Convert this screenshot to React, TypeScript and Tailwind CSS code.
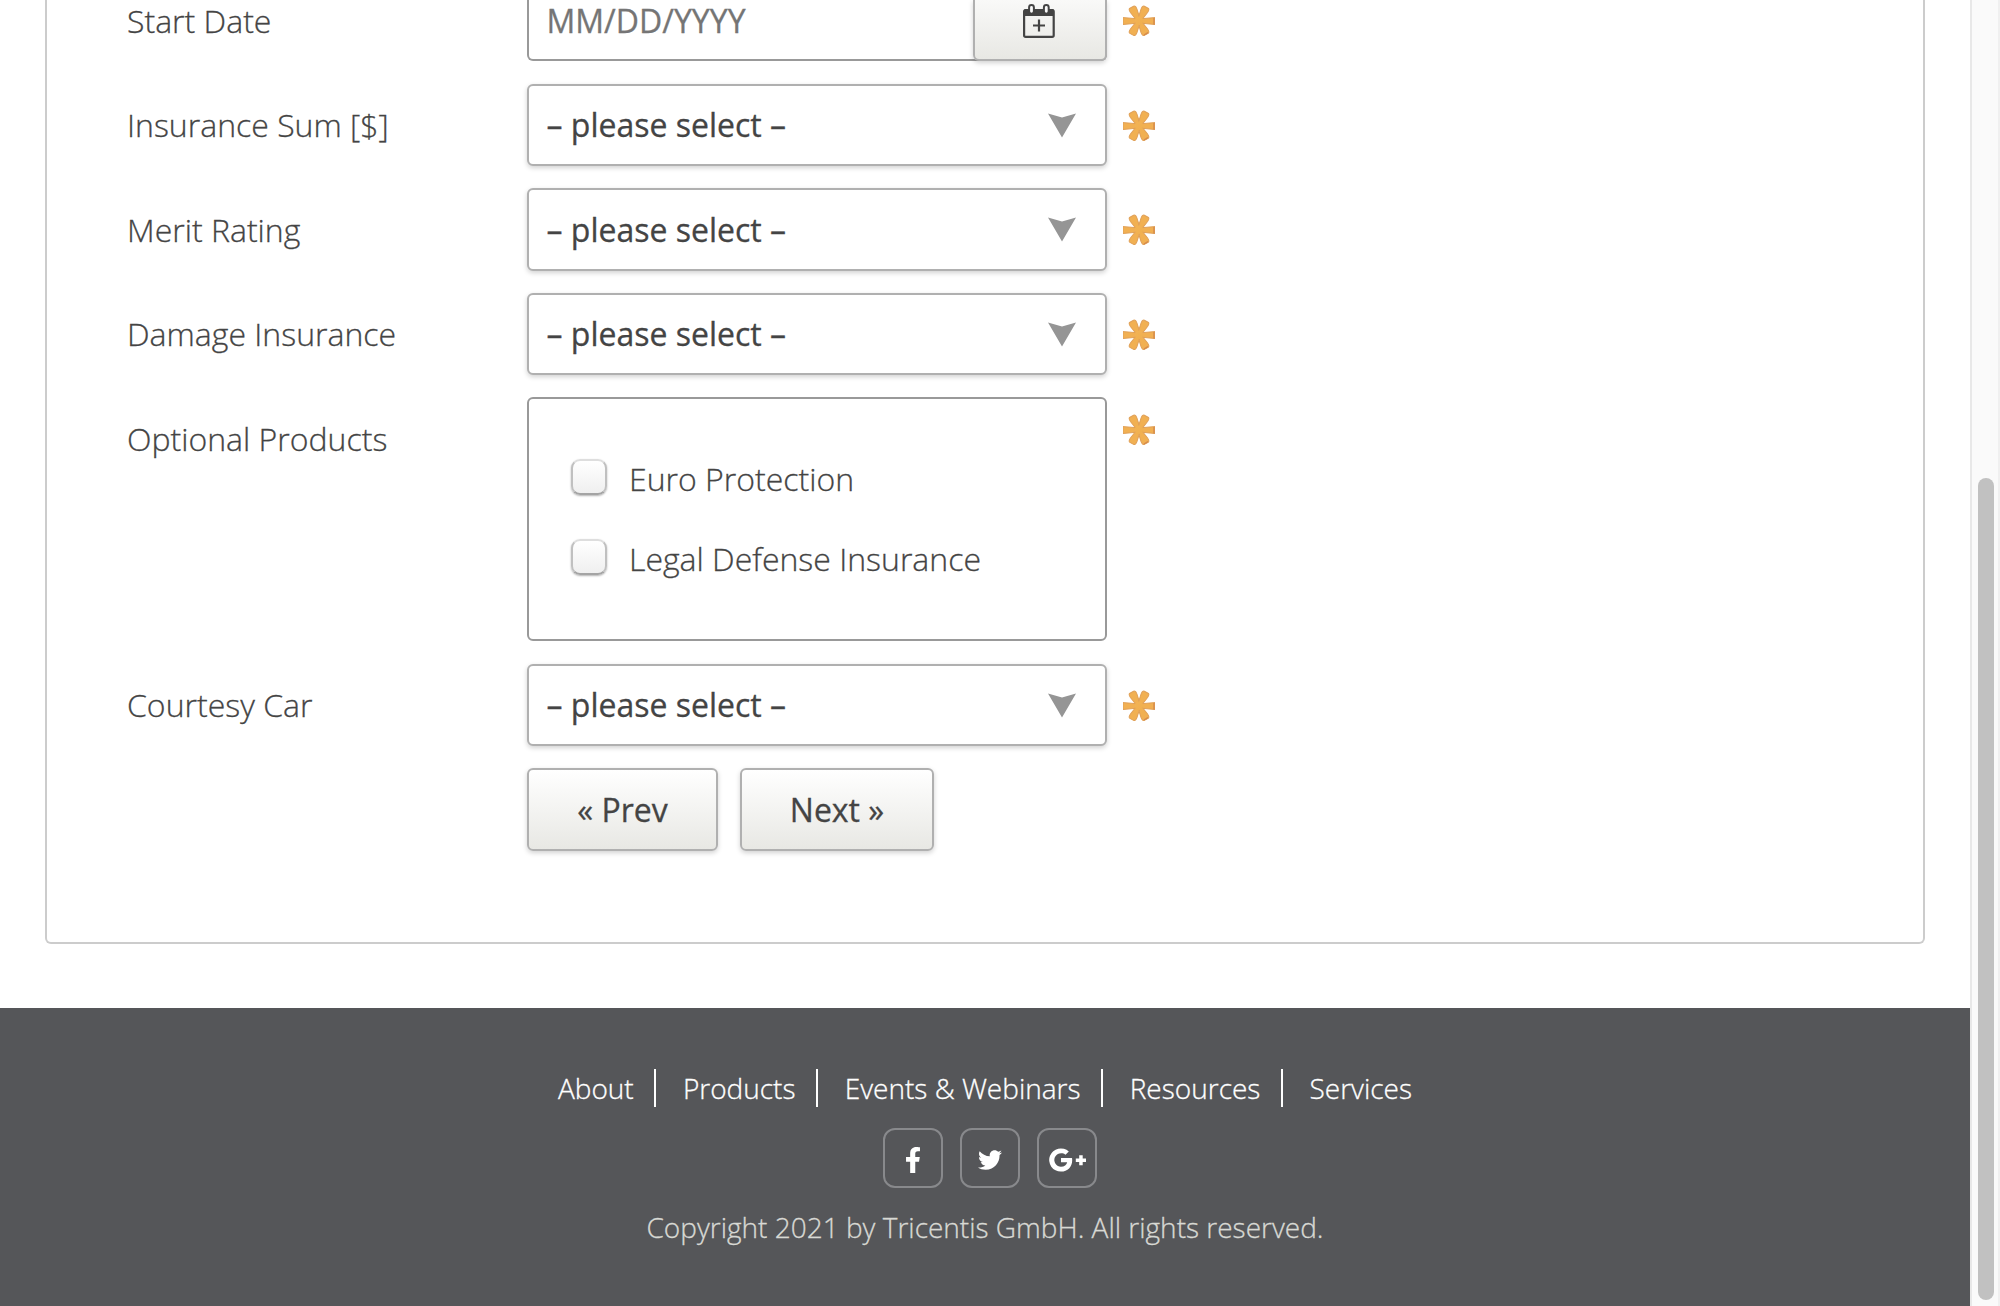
import React from "react";
import { FaFacebookF, FaTwitter } from "react-icons/fa";

const arm = "M14.400 15.800 12.300 4.500Q11.900 .4 13.900 .4h4.200Q20.100 .4 19.700 4.500L17.600 15.800Z";

function Asterisk() {
  return (
    <svg viewBox="0 0 32 32" className="h-8 w-8 shrink-0">
      <defs>
        <linearGradient id="amber" gradientUnits="userSpaceOnUse" x1="4" y1="2" x2="28" y2="30">
          <stop offset="0" stopColor="#f4b65c" />
          <stop offset="0.6" stopColor="#f0b050" />
          <stop offset="1" stopColor="#e39a4c" />
        </linearGradient>
      </defs>
      <path d="M0 12.600 16 13.900 32 12.600V19.500L16 18 0 19.500Z" fill="#f1b052" stroke="#e0a058" strokeWidth="1" />
      <g fill="#f1b052" stroke="#e0a058" strokeWidth="1">
        <path d={arm} transform="rotate(-28 16 15.800)" />
        <path d={arm} transform="rotate(28 16 15.800)" />
        <path d={arm} transform="rotate(152 16 15.800)" />
        <path d={arm} transform="rotate(208 16 15.800)" />
      </g>
      <path d="M31 13v6.500M25 27.500l-4 2.500" stroke="#d58a4c" strokeWidth="1.400" fill="none" />
      <circle cx="16" cy="15.800" r="4.200" fill="url(#amber)" />
    </svg>
  );
}

function Arrow() {
  return (
    <svg viewBox="0 0 28 25" className="mr-[29px] h-[25px] w-7" fill="#959595">
      <path d="M0 .5 14 4.5 28 .5 14 24.5Z" />
    </svg>
  );
}

function CalendarIcon() {
  return (
    <svg viewBox="0 0 32 34" className="h-[34px] w-8" fill="none" stroke="#444">
      <rect x="1.1" y="6" width="29.6" height="26.9" rx="1.6" strokeWidth="2.2" />
      <path d="M1 12V6.5Q1 5 2.5 5h27Q31 5 31 6.5V12Z" fill="#444" stroke="none" />
      <rect x="6.1" y="1.1" width="4.8" height="8.6" rx="2.4" fill="#fafafa" strokeWidth="2" />
      <rect x="20.9" y="1.1" width="4.8" height="8.6" rx="2.4" fill="#fafafa" strokeWidth="2" />
      <path d="M10 21.5h12M16 15.5v12" strokeWidth="2.2" />
    </svg>
  );
}

function GooglePlus() {
  return (
    <svg viewBox="0 0 37 24" className="h-6 w-[37px]" fill="#fff">
      <path d="M12 9.9v4.300h6.200c-.5 2.700-2.900 4.600-6.200 4.600a6.800 6.800 0 1 1 4.500-12l3.300-3.200A11.600 11.600 0 1 0 12 23.600c6.700 0 11.200-4.700 11.200-11.400 0-.8-.1-1.600-.2-2.300Z" />
      <path d="M30.200 7.200h3.500v3.300H37v3.400h-3.300v3.300h-3.500v-3.300h-3.400v-3.400h3.400Z" />
    </svg>
  );
}

function Label({ children, className = "leading-[82px]" }: { children: React.ReactNode; className?: string }) {
  return <div className={`w-[400px] shrink-0 text-[32px] font-light ${className}`}>{children}</div>;
}

function SelectRow({ label, className, labelClass }: { label: string; className: string; labelClass?: string }) {
  return (
    <div className={`flex items-start ${className}`}>
      <Label className={labelClass}>{label}</Label>
      <div className="mr-4 flex h-full w-[580px] items-center justify-between rounded-[6px] border-2 border-[#b0b0b0] bg-white pl-[17.5px] shadow-[0_2px_5px_rgba(0,0,0,0.18)]">
        <span className="text-[32px] leading-[78px]">– please select –</span>
        <Arrow />
      </div>
      <div className="mt-[26px]">
        <Asterisk />
      </div>
    </div>
  );
}

function CheckRow({ label }: { label: string }) {
  return (
    <label className="flex h-20 items-center">
      <span className="mt-[-4px] mr-[22px] h-9 w-9 rounded-[9px] border-2 border-t-[#dedede] border-r-[#c0c0c0] border-b-[#a4a4a4] border-l-[#c0c0c0] bg-linear-to-b from-white to-[#efefef] shadow-[0_1px_2px_rgba(0,0,0,0.3)]" />
      <span className="text-[32px] font-light">{label}</span>
    </label>
  );
}

function PushButton({ children, className }: { children: React.ReactNode; className: string }) {
  return (
    <button
      className={`flex h-[83px] items-center justify-center rounded-[6px] border-2 border-[#b0b0b0] bg-linear-to-b from-white to-[#e8e8e4] text-[32px] shadow-[0_2px_5px_rgba(0,0,0,0.18)] ${className}`}
    >
      {children}
    </button>
  );
}

const links = ["About", "Products", "Events & Webinars", "Resources", "Services"];
const socialBox = "flex h-[60px] w-[60px] items-center justify-center rounded-[12px] border-2 border-[#88898c] pt-[3px] text-white";

export default function App() {
  return (
    <div className="flex h-[1306px] w-[2000px] overflow-hidden bg-white font-['Open_Sans',sans-serif] text-[#444] [-webkit-text-stroke:0.3px]">
      <div className="flex w-[1970px] shrink-0 flex-col">
        <main className="mr-[45px] ml-[45px] h-[944px] rounded-b-[6px] border-2 border-t-0 border-[#ccc] pl-20">
          <div className="flex h-[61px] items-start">
            <Label className="leading-[42px]">Start Date</Label>
            <div className="mr-4 flex h-[61px] w-[580px] rounded-b-[6px] border-2 border-t-0 border-[#999] bg-white pl-[17.5px]">
              <span className="flex-1 text-[32px] leading-[42px] text-[#757575]">MM/DD/YYYY</span>
              <div className="-mx-0.5 -mb-0.5 flex w-[134px] items-start justify-center rounded-b-[6px] border-2 border-t-0 border-[#b0b0b0] bg-linear-to-b from-[#f9f9f8] to-[#e8e8e4] pt-1 pr-[2px] shadow-[0_2px_5px_rgba(0,0,0,0.18)]">
                <CalendarIcon />
              </div>
            </div>
            <div className="mt-[5px]">
              <Asterisk />
            </div>
          </div>
          <SelectRow label="Insurance Sum [$]" className="mt-[23px] h-[82px]" />
          <SelectRow label="Merit Rating" className="mt-[22px] h-[83px]" labelClass="leading-[84px]" />
          <SelectRow label="Damage Insurance" className="mt-[22px] h-[82px]" />
          <div className="mt-[22px] flex h-[244px] items-start">
            <Label className="leading-[84px]">Optional Products</Label>
            <div className="mr-4 h-full w-[580px] rounded-[6px] border-2 border-[#999] bg-white pt-10 pl-[42px]">
              <CheckRow label="Euro Protection" />
              <CheckRow label="Legal Defense Insurance" />
            </div>
            <div className="mt-[17px]">
              <Asterisk />
            </div>
          </div>
          <SelectRow label="Courtesy Car" className="mt-[23px] h-[82px]" />
          <div className="mt-[22px] ml-[400px] flex gap-[22px]">
            <PushButton className="w-[191px]">« Prev</PushButton>
            <PushButton className="w-[194px]">Next »</PushButton>
          </div>
        </main>
        <footer className="mt-16 flex h-[298px] flex-col items-center bg-[#555659] pt-[61px]">
          <nav className="flex h-[38px] items-center text-[28px] text-white">
            {links.map((link, i) => (
              <React.Fragment key={link}>
                {i > 0 && <span className="mr-[26.5px] ml-[20.7px] h-[38px] w-0.5 bg-white" />}
                <a className="pb-px font-light">{link}</a>
              </React.Fragment>
            ))}
          </nav>
          <div className="mt-[21px] ml-[10px] flex gap-[17px]">
            <a className={socialBox}>
              <FaFacebookF size={26} />
            </a>
            <a className={socialBox}>
              <FaTwitter size={24} />
            </a>
            <a className={socialBox}>
              <GooglePlus />
            </a>
          </div>
          <p className="mt-[19px] text-[28px] leading-[40px] font-light text-[#d8d9d4]">
            Copyright 2021 by Tricentis GmbH. All rights reserved.
          </p>
        </footer>
      </div>
      <aside className="flex w-[30px] justify-center border-r-2 border-l-2 border-r-[#f0f0f0] border-l-[#e8e8e8] bg-[#fafafa] pr-0.5 pl-1">
        <div className="mt-[478px] h-[822px] w-4 rounded-full bg-[#c1c1c1]" />
      </aside>
    </div>
  );
}
